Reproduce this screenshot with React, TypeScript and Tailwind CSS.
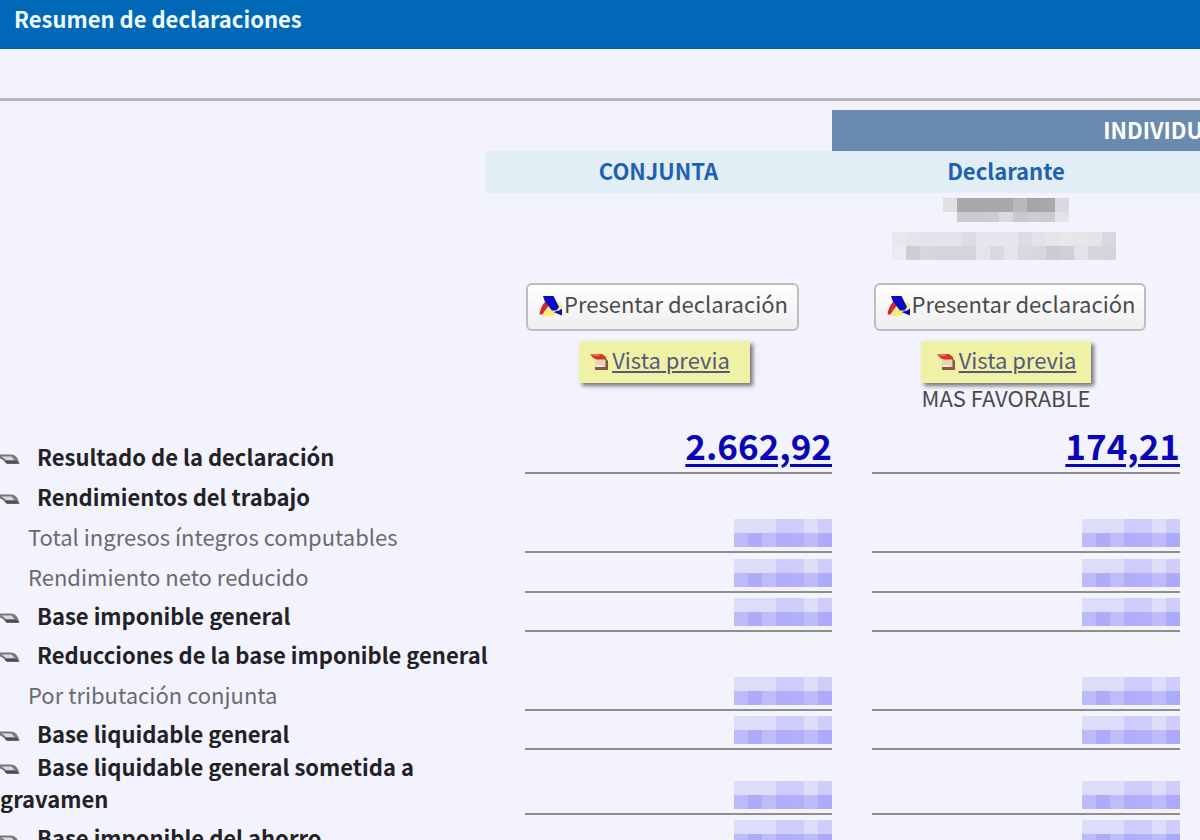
type Row = {
  label: string
  kind: 'title' | 'sub'
  values?: [string | null, string | null]
}

// null = importe oculto
const ROWS: Row[] = [
  { label: 'Rendimientos del trabajo', kind: 'title' },
  { label: 'Total ingresos íntegros computables', kind: 'sub', values: [null, null] },
  { label: 'Rendimiento neto reducido', kind: 'sub', values: [null, null] },
  { label: 'Base imponible general', kind: 'title', values: [null, null] },
  { label: 'Reducciones de la base imponible general', kind: 'title' },
  { label: 'Por tributación conjunta', kind: 'sub', values: [null, null] },
  { label: 'Base liquidable general', kind: 'title', values: [null, null] },
  { label: 'Base liquidable general sometida a gravamen', kind: 'title', values: [null, null] },
  { label: 'Base imponible del ahorro', kind: 'title', values: [null, null] },
]

const AMOUNT_PIXELS = [
  ['#dddcf9', '#dddcf9', '#dddcf9', '#cdccfa', '#cfcefa', '#dedef9', '#cfcefa'],
  ['#bcbbfa', '#adabfa', '#bebdfa', '#b0aefa', '#b2b0fa', '#bdbbfa', '#acaafa'],
]

const NIF_PIXELS = [
  ['#dfdfe4', '#a9a9ab', '#a9a9ab', '#a9a9ab', '#a9a9ab', '#b9b9bc', '#a5a5a8', '#a8a8ab', '#d9d9df'],
  ['#f1f2fb', '#cbcbce', '#cbcbce', '#cccccf', '#dadadf', '#c9c9cd', '#cdcdd1', '#cbcbcf', '#e2e2e8'],
]

const NAME_PIXELS = [
  ['#e7e7ec', '#e4e4ea', '#e3e3e9', '#e3e3e9', '#e3e3e9', '#dcdce2', '#e6e6ec', '#e6e6ec', '#e6e6ec', '#dcdce2', '#e2e2e8', '#e6e6ea', '#e8e8ec', '#e6e6ea', '#e3e3e8', '#d8d8de'],
  ['#ebebf1', '#cdcdd2', '#d6d6dc', '#d4d4da', '#d4d4da', '#d4d4da', '#e4e4ea', '#d9d9df', '#e4e4ea', '#d9d9df', '#d6d6dc', '#cbcbd1', '#cfcfd4', '#e2e2e8', '#d5d5db', '#d4d4da'],
]

function Pixels({ data, label, className }: { data: string[][]; label: string; className: string }) {
  return (
    <svg
      role="img"
      aria-label={label}
      width={data[0].length * 14}
      height={data.length * 14}
      shapeRendering="crispEdges"
      className={className}
    >
      {data.map((line, y) =>
        line.map((fill, x) => <rect key={`${x}-${y}`} x={x * 14} y={y * 14} width={14} height={14} fill={fill} />),
      )}
    </svg>
  )
}

function Bullet() {
  return (
    <svg width="20" height="12" viewBox="0 0 20 12" aria-hidden="true" className="mr-[17px] inline-block">
      <path d="M0 0.5H11C15 0.5 18 3.5 19.5 9.5H6C4.5 7 2.5 5.5 0 4.5Z" fill="#77787c" />
      <path d="M1 2.5H11.5L14.5 6H6C4.5 4.5 3 3.5 1 2.5Z" fill="#d9dade" />
      <path d="M4.5 7H16.5L19.5 9.8H7Z" fill="#4c4d50" />
    </svg>
  )
}

function AgencyLogo() {
  return (
    <svg width="24" height="22" viewBox="0 0 24 22" aria-hidden="true" className="shrink-0">
      <path d="M6 7L9.5 11C8 13 5.500 16 3.5 19.5H0.5C1 15 3 10 6 7Z" fill="#d8242c" />
      <path d="M4 20C6 16 8 13 10.5 12L17 19C12 21.5 7 21.5 4 20Z" fill="#f6ee6a" />
      <path d="M19 7L23 9V14L17 13Z" fill="#f3ee8a" />
      <path d="M4 1H14.5L20 12L17.500 15.500H13L6 7Z" fill="#0b0bc4" />
      <path d="M14.5 17L20 15.5L23 13.5V20.5Z" fill="#0b0b9c" />
    </svg>
  )
}

function PdfIcon() {
  return (
    <svg width="20" height="18" viewBox="0 0 20 18" aria-hidden="true" className="shrink-0">
      <path d="M6 4H15L19 8V17H6Z" fill="#e9d3b4" />
      <path d="M15 3L19 8V14H16.5V7Z" fill="#7c5a48" />
      <path d="M1 1.5L13 1L17 4V6.5H8L5 5.5Z" fill="#d8371f" />
      <path d="M3 1.5H9L11 3H5Z" fill="#ee7a55" />
      <path d="M6 14H19V17H6Z" fill="#8a5a45" />
      <path d="M7 12H14V14H7Z" fill="#f3ece0" />
    </svg>
  )
}

function SubmitButton() {
  return (
    <button
      type="button"
      className="mt-[90px] ml-2 flex h-12 items-start gap-px rounded-md border-2 border-[#bdbdc2] bg-linear-to-b from-white to-[#eeeeef] pt-[2px] pr-[9px] pl-[11px] leading-8 text-[#4a4a4c]"
    >
      <span className="pt-2">
        <AgencyLogo />
      </span>
      Presentar declaración
    </button>
  )
}

function PreviewLink({ className }: { className: string }) {
  return (
    <a
      href="#vista-previa"
      className={`mt-[10px] flex h-[42px] items-center gap-[3px] bg-[#eff2a6] text-[#55597c] shadow-[3px_3px_4px_#77777a] ${className}`}
    >
      <PdfIcon />
      <span className="pb-[6px] underline decoration-2 underline-offset-2">Vista previa</span>
    </a>
  )
}

function Amount({ value }: { value: string | null }) {
  return (
    <td className="pl-10 text-right align-bottom">
      <div className="flex justify-end border-b-2 border-[#8e8e90]">
        {value ? (
          <a href="#resultado" className="pb-[7px] text-[35px] leading-10 font-bold text-[#0a06b8] underline decoration-3 underline-offset-4">
            {value}
          </a>
        ) : (
          <Pixels data={AMOUNT_PIXELS} label="Importe oculto" className="mb-1" />
        )}
      </div>
    </td>
  )
}

export default function App() {
  return (
    <div className="h-screen overflow-hidden bg-[#f2f3fc] font-['Noto_Sans_CJK_SC','Noto_Sans',sans-serif] text-[22px]">
      <header className="h-[49px] border-b-2 border-[#0560a8] bg-[#0068b6] px-[14px] pt-[2px]">
        <h1 className="leading-8 font-bold text-[#f0fbff]">Resumen de declaraciones</h1>
      </header>

      <hr className="mt-[49px] mb-[9px] border-t-3 border-[#b6b6b9]" />

      <table className="w-[1528px] table-fixed border-collapse">
        <colgroup>
          <col />
          <col className="w-[347px]" />
          <col className="w-[348px]" />
          <col className="w-[348px]" />
        </colgroup>
        <thead>
          <tr className="h-[41px]">
            <td colSpan={2} />
            <th colSpan={2} scope="colgroup" className="bg-[#6a8bb0] pb-1 leading-8 font-bold text-white">
              INDIVIDUALES
            </th>
          </tr>
          <tr className="h-[42px] text-[#1c62b0]">
            <td />
            <th scope="col" className="bg-[#e1eef6] pb-1 leading-8 font-bold">CONJUNTA</th>
            <th scope="col" className="bg-[#e1eef6] pb-1 leading-8 font-bold">Declarante</th>
            <td className="bg-[#e1eef6]" />
          </tr>
        </thead>
        <tbody>
          <tr className="h-[223px]">
            <td />
            <td className="align-top">
              <div className="flex flex-col items-center">
                <SubmitButton />
                <PreviewLink className="ml-3 pr-5 pl-[10px]" />
              </div>
            </td>
            <td className="align-top">
              <div className="relative flex flex-col items-center">
                <div className="absolute inset-x-0 top-[5px] flex flex-col items-center gap-[10px]">
                  <Pixels data={NIF_PIXELS} label="NIF oculto" className="h-6" />
                  <Pixels data={NAME_PIXELS} label="Nombre oculto" className="mr-1" />
                </div>
                <SubmitButton />
                <PreviewLink className="px-[15px]" />
                <p className="leading-7 text-[#4a4a4c]">MAS FAVORABLE</p>
              </div>
            </td>
            <td />
          </tr>
          <tr className="h-[58px]">
            <th scope="row" className="pb-[2px] text-left align-bottom leading-8 font-bold text-[#222226]">
              <Bullet />
              Resultado de la declaración
            </th>
            <Amount value="2.662,92" />
            <Amount value="174,21" />
            <td />
          </tr>
          {ROWS.map((row) => (
            <tr key={row.label} className={row.kind === 'title' ? 'h-[39px]' : 'h-10'}>
              {row.kind === 'title' ? (
                <th
                  scope="row"
                  colSpan={row.values ? 1 : 3}
                  className="pb-px text-left align-bottom leading-8 font-bold text-[#222226]"
                >
                  <Bullet />
                  {row.label}
                </th>
              ) : (
                <th scope="row" className="pb-px pl-7 text-left align-bottom leading-8 font-normal text-[#6a6a6e]">
                  {row.label}
                </th>
              )}
              {row.values?.map((value, i) => <Amount key={i} value={value} />)}
              <td />
            </tr>
          ))}
        </tbody>
      </table>
    </div>
  )
}
